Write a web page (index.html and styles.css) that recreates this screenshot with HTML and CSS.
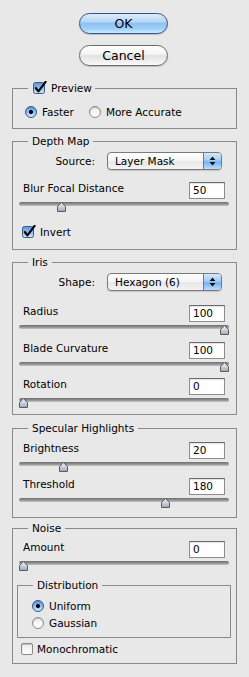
FILE: index.html
```html
<!DOCTYPE html>
<html>
<head>
<meta charset="utf-8">
<title>Lens Blur</title>
<link rel="stylesheet" href="styles.css">
</head>
<body>
<svg class="defs" width="0" height="0" aria-hidden="true">
  <defs>
    <linearGradient id="thumbGrad" x1="0" y1="0" x2="0" y2="1">
      <stop offset="0" stop-color="#eef2f7"/>
      <stop offset="0.5" stop-color="#c9d2de"/>
      <stop offset="1" stop-color="#9aa7b7"/>
    </linearGradient>
    <linearGradient id="cbGrad" x1="0" y1="0" x2="0" y2="1">
      <stop offset="0" stop-color="#5d90d8"/>
      <stop offset="0.5" stop-color="#8ebdf0"/>
      <stop offset="1" stop-color="#cfeaff"/>
    </linearGradient>
  </defs>
</svg>
<div class="dialog">
  <div class="buttons">
    <button class="btn btn-ok">OK</button>
    <button class="btn btn-cancel">Cancel</button>
  </div>

  <fieldset class="group g-preview">
    <legend class="legend legend-check">
      <svg class="cb" width="14" height="14" viewBox="0 0 14 14"><rect x="0.5" y="1.5" width="11" height="11" rx="2" fill="url(#cbGrad)" stroke="#3d5a88"/><path d="M2.8 7 L5.4 10.4 L12.6 0.8" fill="none" stroke="#000" stroke-width="2.1" stroke-linejoin="round" stroke-linecap="round"/></svg>
      <span>Preview</span>
    </legend>
    <div class="radio-row">
      <span class="opt"><span class="radio on"></span>Faster</span>
      <span class="opt opt-2"><span class="radio off"></span>More Accurate</span>
    </div>
  </fieldset>

  <fieldset class="group g-depth">
    <legend class="legend">Depth Map</legend>
    <div class="popup-row">
      <span class="popup-label">Source:</span>
      <div class="popup"><span class="popup-text">Layer Mask</span><span class="popup-arrows"><svg width="7" height="10" viewBox="0 0 7 10"><path d="M0.6 4 L3.5 0.6 L6.4 4 Z M0.6 6 L3.5 9.4 L6.4 6 Z" fill="#111"/></svg></span></div>
    </div>
    <div class="field-row r-blur"><span class="field-label">Blur Focal Distance</span><span class="num">50</span></div>
    <div class="slider"><div class="track"></div><svg class="thumb" style="--v:0.19" width="9" height="10" viewBox="0 0 9 10"><path d="M0.5 9.5V4.5L4.5 0.6L8.5 4.5V9.5Z" fill="url(#thumbGrad)" stroke="#5b5b5b"/></svg></div>
    <div class="check-row r-invert">
      <svg class="cb" width="14" height="14" viewBox="0 0 14 14"><rect x="0.5" y="1.5" width="11" height="11" rx="2" fill="url(#cbGrad)" stroke="#3d5a88"/><path d="M2.8 7 L5.4 10.4 L12.6 0.8" fill="none" stroke="#000" stroke-width="2.1" stroke-linejoin="round" stroke-linecap="round"/></svg>
      <span>Invert</span>
    </div>
  </fieldset>

  <fieldset class="group g-iris">
    <legend class="legend">Iris</legend>
    <div class="popup-row">
      <span class="popup-label">Shape:</span>
      <div class="popup"><span class="popup-text">Hexagon (6)</span><span class="popup-arrows"><svg width="7" height="10" viewBox="0 0 7 10"><path d="M0.6 4 L3.5 0.6 L6.4 4 Z M0.6 6 L3.5 9.4 L6.4 6 Z" fill="#111"/></svg></span></div>
    </div>
    <div class="field-row r-radius"><span class="field-label">Radius</span><span class="num">100</span></div>
    <div class="slider"><div class="track"></div><svg class="thumb" style="--v:1" width="9" height="10" viewBox="0 0 9 10"><path d="M0.5 9.5V4.5L4.5 0.6L8.5 4.5V9.5Z" fill="url(#thumbGrad)" stroke="#5b5b5b"/></svg></div>
    <div class="field-row r-next"><span class="field-label">Blade Curvature</span><span class="num">100</span></div>
    <div class="slider"><div class="track"></div><svg class="thumb" style="--v:1" width="9" height="10" viewBox="0 0 9 10"><path d="M0.5 9.5V4.5L4.5 0.6L8.5 4.5V9.5Z" fill="url(#thumbGrad)" stroke="#5b5b5b"/></svg></div>
    <div class="field-row r-next2"><span class="field-label">Rotation</span><span class="num">0</span></div>
    <div class="slider"><div class="track"></div><svg class="thumb" style="--v:0" width="9" height="10" viewBox="0 0 9 10"><path d="M0.5 9.5V4.5L4.5 0.6L8.5 4.5V9.5Z" fill="url(#thumbGrad)" stroke="#5b5b5b"/></svg></div>
  </fieldset>

  <fieldset class="group g-spec">
    <legend class="legend">Specular Highlights</legend>
    <div class="field-row r-first"><span class="field-label">Brightness</span><span class="num">20</span></div>
    <div class="slider"><div class="track"></div><svg class="thumb" style="--v:0.2" width="9" height="10" viewBox="0 0 9 10"><path d="M0.5 9.5V4.5L4.5 0.6L8.5 4.5V9.5Z" fill="url(#thumbGrad)" stroke="#5b5b5b"/></svg></div>
    <div class="field-row r-next2"><span class="field-label">Threshold</span><span class="num">180</span></div>
    <div class="slider"><div class="track"></div><svg class="thumb" style="--v:0.705" width="9" height="10" viewBox="0 0 9 10"><path d="M0.5 9.5V4.5L4.5 0.6L8.5 4.5V9.5Z" fill="url(#thumbGrad)" stroke="#5b5b5b"/></svg></div>
  </fieldset>

  <fieldset class="group g-noise">
    <legend class="legend">Noise</legend>
    <div class="field-row r-amount"><span class="field-label">Amount</span><span class="num">0</span></div>
    <div class="slider"><div class="track"></div><svg class="thumb" style="--v:0" width="9" height="10" viewBox="0 0 9 10"><path d="M0.5 9.5V4.5L4.5 0.6L8.5 4.5V9.5Z" fill="url(#thumbGrad)" stroke="#5b5b5b"/></svg></div>
    <fieldset class="group g-dist">
      <legend class="legend">Distribution</legend>
      <div class="opt dist-opt"><span class="radio on"></span>Uniform</div>
      <div class="opt dist-opt dist-2"><span class="radio off"></span>Gaussian</div>
    </fieldset>
    <div class="check-row r-mono">
      <span class="checkbox off"></span>
      <span>Monochromatic</span>
    </div>
  </fieldset>
</div>
</body>
</html>
```

FILE: styles.css
```css
* { box-sizing: border-box; }
html, body { margin: 0; padding: 0; }
body {
  background: #e8e8e8;
  font-family: "DejaVu Sans", Verdana, sans-serif;
  font-size: 10.5px;
  color: #000;
  width: 249px;
  height: 677px;
  overflow: hidden;
}
.defs { display: block; width: 0; height: 0; overflow: hidden; }

.dialog { display: flex; flex-direction: column; padding-top: 13px; }

.buttons {
  display: flex;
  flex-direction: column;
  align-items: flex-start;
  padding-left: 79px;
  gap: 11px;
  margin-bottom: 15px;
}
.btn {
  width: 89px;
  height: 21px;
  border-radius: 11px;
  padding: 0;
  font-family: "DejaVu Sans", Verdana, sans-serif;
  font-size: 12.5px;
  line-height: 19px;
  color: #000;
  box-shadow: 0 1px 1px rgba(0,0,0,0.18);
}
.btn-ok {
  border: 1px solid #34528a;
  background: linear-gradient(#dcebfa 0%, #b8d7f6 40%, #8fc0f1 50%, #a3d1fb 80%, #c9ebff 100%);
}
.btn-cancel {
  border: 1px solid #6a6a6a;
  background: linear-gradient(#ffffff 0%, #f5f5f5 40%, #e3e3e3 52%, #efefef 80%, #fbfbfb 100%);
}

.group {
  margin: 0 12px;
  border: 1px solid #8a8a8a;
  padding: 0 7px 0 6px;
  min-width: 0;
}
.legend {
  margin-left: 9px;
  padding: 0 4px;
  height: 14px;
  line-height: 14px;
}
.legend-check {
  display: flex;
  align-items: center;
  padding: 0 3px 0 5px;
}
.legend-check .cb { margin-right: 4px; }

.g-preview { padding-top: 10px; padding-bottom: 9px; }
.g-depth { margin-top: 5px; padding-top: 4px; padding-bottom: 10px; }
.g-iris { margin-top: 5px; padding-top: 4px; padding-bottom: 6px; }
.g-spec { margin-top: 6px; padding-bottom: 9px; }
.g-noise { margin-top: 3px; padding-bottom: 7px; }

.radio-row { display: flex; align-items: center; height: 14px; padding-left: 6px; }
.opt { display: flex; align-items: center; height: 14px; gap: 5px; }
.opt-2 { margin-left: 15px; }

.radio { width: 12px; height: 12px; border-radius: 50%; flex: none; }
.radio.on {
  border: 1px solid #34538a;
  background:
    radial-gradient(circle at 50% 50%, #000 0 1.7px, transparent 2.3px),
    linear-gradient(#5a8fd8 0%, #8dbdf0 50%, #cdeaff 100%);
}
.radio.off {
  border: 1px solid #8a8a8a;
  background: linear-gradient(#ececec, #ffffff);
  box-shadow: inset 0 1px 1px rgba(0,0,0,0.2);
}
.checkbox { width: 12px; height: 12px; flex: none; }
.checkbox.off {
  border: 1px solid #8a8a8a;
  border-radius: 2px;
  background: linear-gradient(#ededed, #ffffff);
  box-shadow: inset 0 1px 1px rgba(0,0,0,0.2);
}
.cb { display: block; flex: none; }

.popup-row { display: flex; align-items: center; height: 18px; }
.popup-label { width: 76px; text-align: right; }
.popup {
  display: flex;
  width: 115px;
  height: 18px;
  margin-left: 12px;
  border: 1px solid #7a7a7a;
  border-radius: 4px;
  overflow: hidden;
  background: linear-gradient(#ffffff 0%, #f6f6f6 45%, #e7e7e7 55%, #f4f4f4 100%);
  box-shadow: 0 1px 1px rgba(0,0,0,0.15);
}
.popup-text { flex: 1; padding-left: 7px; line-height: 16px; }
.popup-arrows {
  width: 18px;
  display: flex;
  align-items: center;
  justify-content: center;
  border-left: 1px solid #5d7ba8;
  background: linear-gradient(#d3e7fb 0%, #a5cdf4 45%, #78b1ec 55%, #b9deff 100%);
}

.field-row {
  display: flex;
  justify-content: space-between;
  align-items: flex-start;
  height: 17px;
  padding: 0 4px 0 4px;
}
.field-label { line-height: 14px; margin-top: -1px; }
.num {
  width: 36px;
  height: 17px;
  background: #fff;
  border: 1px solid #8c8c8c;
  border-top-color: #6a6a6a;
  padding-left: 3px;
  line-height: 15px;
  box-shadow: inset 0 1px 1px rgba(0,0,0,0.12);
}
.r-blur { margin-top: 12px; }
.r-radius { margin-top: 14px; }
.r-next { margin-top: 7px; }
.r-next2 { margin-top: 6px; }
.r-first { margin-top: 7px; }
.r-amount { margin-top: 6px; }

.slider { position: relative; height: 10px; margin-top: 3px; }
.track {
  margin-top: 3px;
  height: 4px;
  border-radius: 2px;
  background: linear-gradient(#6f6f6f 0%, #8f8f8f 50%, #c4c4c4 100%);
}
.thumb {
  position: absolute;
  top: 0;
  left: calc(var(--v) * (100% - 9px));
  display: block;
}

.check-row { display: flex; align-items: center; height: 14px; gap: 4px; }
.r-invert { margin-top: 13px; padding-left: 3px; }
.r-invert .cb { margin-top: -1px; }
.r-mono { margin-top: 4px; padding-left: 2px; gap: 4px; }

.g-dist {
  margin: 7px -2px 0 -2px;
  padding: 7px 8px 7px 14px;
}
.g-dist .legend { margin-left: 1px; }
.dist-opt { gap: 5px; }
.dist-2 { margin-top: 3px; }
```
